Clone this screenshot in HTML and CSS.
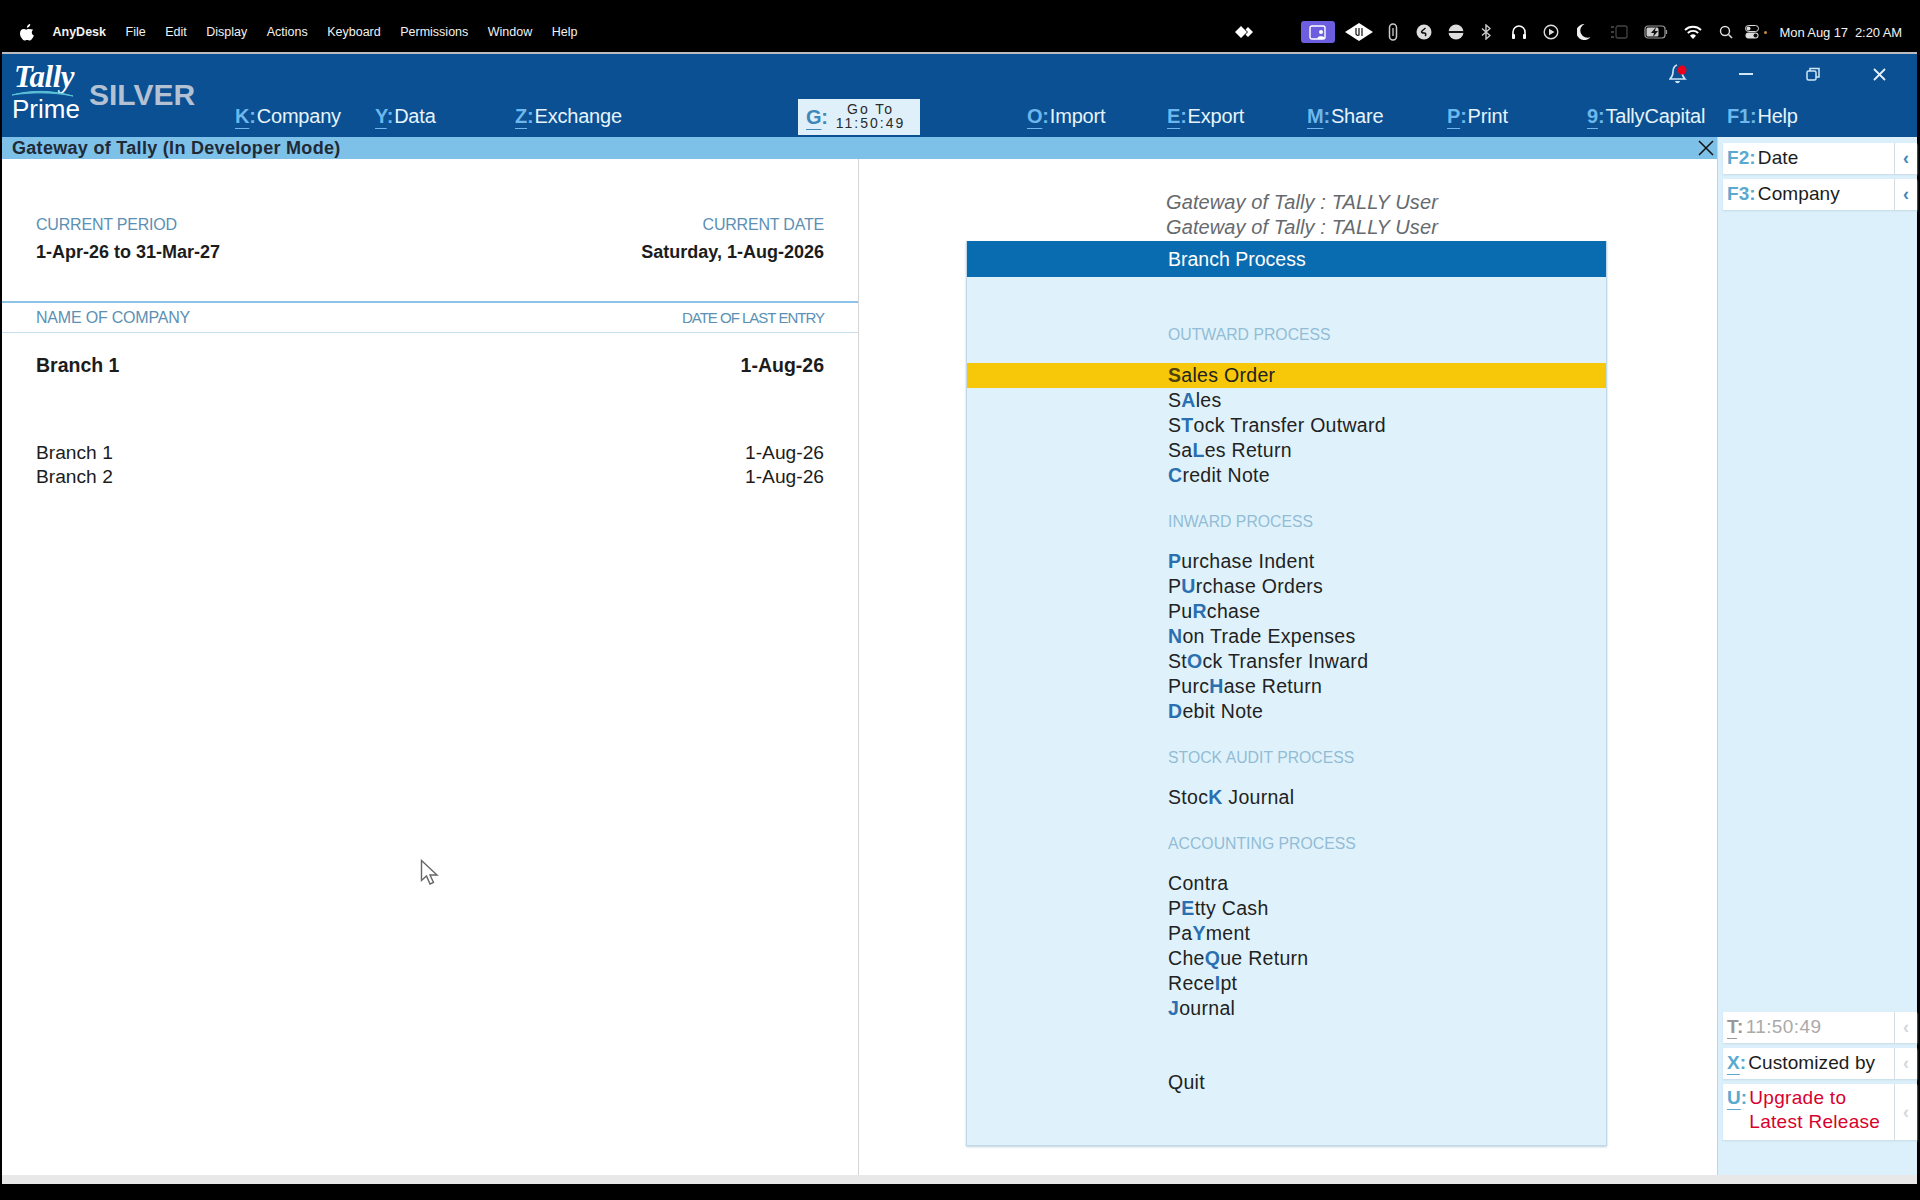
FILE: index.html
```html
<!DOCTYPE html>
<html>
<head>
    <title>TallyPrime</title>
    <link rel="stylesheet" href="styles.css">
</head>
<body>
    <div class="menubar">
        <div class="menus">
            <svg class="apple" width="14" height="17" viewBox="0 0 14 17"><path fill="#fff" d="M10.2 0c.1 1-.3 1.9-.9 2.6-.6.7-1.5 1.2-2.4 1.1-.1-.9.4-1.9.9-2.5C8.400.5 9.400.1 10.200 0zM13.300 5.800c-.9.6-1.500 1.500-1.500 2.700 0 1.400.8 2.500 2.100 3-.4 1.100-.9 2.100-1.600 3.100-.7 1-1.400 1.900-2.500 1.900s-1.400-.6-2.600-.6c-1.200 0-1.600.6-2.600.6-1.100 0-1.900-1-2.600-2C.5 12.900 0 11.100 0 9.400c0-2.800 1.800-4.300 3.600-4.300 1 0 1.800.6 2.500.6.6 0 1.600-.7 2.700-.7 1.700 0 3 .2 4.500.8z"/></svg>
            <span class="menu-app">AnyDesk</span>
            <span>File</span>
            <span>Edit</span>
            <span>Display</span>
            <span>Actions</span>
            <span>Keyboard</span>
            <span>Permissions</span>
            <span>Window</span>
            <span>Help</span>
        </div>
        <div class="status">
            <svg class="st-anydesk" width="20" height="14" viewBox="0 0 20 14"><path fill="#fff" d="M6 1l6 6-6 6-6-6zM13 2l5 5-5 5-2.500-2.500L13 7l-2.500-2.500z"/></svg>
            <div class="st-cast">
                <svg width="18" height="15" viewBox="0 0 18 15"><rect x="1" y="1" width="15" height="13" rx="2" fill="none" stroke="#fff" stroke-width="1.400"/><circle cx="12" cy="7" r="2" fill="#fff"/><path fill="#fff" d="M8.500 13c0-2.500 7-2.500 7 0v1h-7z"/></svg>
            </div>
            <svg class="st-ua" width="28" height="18" viewBox="0 0 28 18"><path fill="#fff" d="M14 0l14 9-14 9L0 9z"/><path fill="none" stroke="#111" stroke-width="1.200" d="M11 5v6a2 2 0 0 0 3 1V5M17 13V5"/></svg>
            <svg class="st-clip" width="10" height="18" viewBox="0 0 10 18"><rect x="1.500" y="1" width="7" height="16" rx="3.500" fill="none" stroke="#ccc" stroke-width="1.500"/><path d="M5 5v8" stroke="#ccc" stroke-width="1.300"/></svg>
            <svg class="st-shazam" width="16" height="16" viewBox="0 0 16 16"><circle cx="8" cy="8" r="7.500" fill="#ddd"/><path fill="none" stroke="#111" stroke-width="1.500" d="M9.500 4L6 7c-1 1 0 2 2 2s2.500 1.500 1 3"/></svg>
            <svg class="st-globe" width="16" height="16" viewBox="0 0 16 16"><circle cx="8" cy="8" r="7.500" fill="#ddd"/><path d="M0 8h16" stroke="#111" stroke-width="2"/></svg>
            <svg class="st-bt" width="10" height="16" viewBox="0 0 10 16"><path fill="none" stroke="#ccc" stroke-width="1.400" d="M1 4.500l8 7L5 15V1l4 3.500-8 7"/></svg>
            <svg class="st-phones" width="16" height="16" viewBox="0 0 16 16"><path fill="none" stroke="#fff" stroke-width="1.600" d="M2 12V8a6 6 0 0 1 12 0v4"/><rect x="1" y="10" width="3" height="5" rx="1" fill="#fff"/><rect x="12" y="10" width="3" height="5" rx="1" fill="#fff"/></svg>
            <svg class="st-play" width="16" height="16" viewBox="0 0 16 16"><circle cx="8" cy="8" r="6.800" fill="none" stroke="#ddd" stroke-width="1.400"/><path fill="#ddd" d="M6 4.800L11.500 8 6 11.200z"/></svg>
            <svg class="st-moon" width="14" height="16" viewBox="0 0 14 16"><path fill="#eee" d="M7.500 0a8 8 0 1 0 6 13A7 7 0 0 1 7.500 0z"/></svg>
            <svg class="st-screen" width="18" height="14" viewBox="0 0 18 14"><rect x="6" y="1" width="11" height="12" rx="2" fill="none" stroke="#444" stroke-width="1.300"/><path d="M1 2h3M1 7h3M1 12h3" stroke="#555" stroke-width="1.600"/></svg>
            <svg class="st-batt" width="24" height="14" viewBox="0 0 24 14"><rect x="1" y="1" width="20" height="12" rx="3" fill="none" stroke="#999" stroke-width="1.200"/><rect x="2.500" y="2.500" width="12" height="9" rx="1.500" fill="#ccc"/><path d="M22.500 5v4" stroke="#999" stroke-width="1.200"/><path fill="#111" d="M12 2L7 8h3l-1 4 5-6h-3z"/></svg>
            <svg class="st-wifi" width="18" height="14" viewBox="0 0 18 14"><path fill="none" stroke="#fff" stroke-width="1.800" d="M1 5a11.500 11.500 0 0 1 16 0M3.800 8a7.500 7.500 0 0 1 10.400 0"/><path fill="#fff" d="M9 14l-3-3.300a4.400 4.400 0 0 1 6 0z"/></svg>
            <svg class="st-search" width="14" height="14" viewBox="0 0 14 14"><circle cx="6" cy="6" r="4.500" fill="none" stroke="#ddd" stroke-width="1.400"/><path d="M9.500 9.500L13 13" stroke="#ddd" stroke-width="1.600"/></svg>
            <svg class="st-control" width="14" height="14" viewBox="0 0 14 14"><rect x=".5" y=".5" width="13" height="6" rx="3" fill="none" stroke="#ddd"/><circle cx="3.500" cy="3.500" r="2" fill="#ddd"/><rect x=".5" y="7.500" width="13" height="6" rx="3" fill="#ddd"/><circle cx="10.500" cy="10.500" r="2" fill="#111"/></svg>
            <div class="st-dot"></div>
            <span class="clock">Mon Aug 17&nbsp;&nbsp;2:20 AM</span>
        </div>
    </div>

    <div class="window">
        <div class="topbar">
            <div class="logo">
                <span class="logo-tally">Tally</span>
                <svg class="logo-swoosh" width="62" height="7" viewBox="0 0 62 7"><path d="M0 5c18-5 40-5 61 1C40 2 20 2 0 5z" fill="#5cc0d8" stroke="#5cc0d8"/></svg>
                <span class="logo-prime">Prime</span>
            </div>
            <div class="logo-silver">SILVER</div>
            <div class="actions">
                <div class="action action-k"><span class="key"><u>K</u>:</span>Company</div>
                <div class="action action-y"><span class="key"><u>Y</u>:</span>Data</div>
                <div class="action action-z"><span class="key"><u>Z</u>:</span>Exchange</div>
                <div class="goto">
                    <span class="goto-key"><u>G</u>:</span>
                    <span class="goto-text">Go To<br>11:50:49</span>
                </div>
                <div class="action action-o"><span class="key"><u>O</u>:</span>Import</div>
                <div class="action action-e"><span class="key"><u>E</u>:</span>Export</div>
                <div class="action action-m"><span class="key"><u>M</u>:</span>Share</div>
                <div class="action action-p"><span class="key"><u>P</u>:</span>Print</div>
                <div class="action action-9"><span class="key"><u>9</u>:</span>TallyCapital</div>
                <div class="action"><span class="key">F1:</span>Help</div>
            </div>
            <div class="window-controls">
                <svg class="bell" width="20" height="22" viewBox="0 0 20 22"><path fill="none" stroke="#cfe6f7" stroke-width="1.600" d="M8 2c-3 1-4 4-4 7 0 3-1 5-3 7h15c-2-2-3-4-3-7"/><path d="M6 18c1 3 4 3 5 0" fill="#cfe6f7"/><circle cx="13" cy="7" r="4.500" fill="#e8001c"/></svg>
                <div class="ctl-min"></div>
                <svg class="ctl-restore" width="14" height="14" viewBox="0 0 14 14"><rect x="1" y="4" width="9" height="9" rx="1.500" fill="none" stroke="#cfe6f7" stroke-width="1.500"/><path d="M4 4V1.500h9V10h-3" fill="none" stroke="#cfe6f7" stroke-width="1.500"/></svg>
                <svg class="ctl-close" width="13" height="13" viewBox="0 0 13 13"><path d="M1 1l11 11M12 1L1 12" stroke="#e4f1fb" stroke-width="1.800"/></svg>
            </div>
        </div>

        <div class="body-row">
            <div class="workarea">
                <div class="titlebar">
                    <span>Gateway of Tally (In Developer Mode)</span>
                    <svg width="16" height="16" viewBox="0 0 16 16"><path d="M1 1l14 14M15 1L1 15" stroke="#111" stroke-width="1.500"/></svg>
                </div>
                <div class="columns">
                    <div class="company-col">
                        <div class="period-labels">
                            <span>CURRENT PERIOD</span>
                            <span>CURRENT DATE</span>
                        </div>
                        <div class="period-values">
                            <span>1-Apr-26 to 31-Mar-27</span>
                            <span>Saturday, 1-Aug-2026</span>
                        </div>
                        <div class="company-head">
                            <span class="head-name">NAME OF COMPANY</span>
                            <span class="head-date">DATE OF LAST ENTRY</span>
                        </div>
                        <div class="company-current">
                            <span>Branch 1</span>
                            <span>1-Aug-26</span>
                        </div>
                        <div class="company-list">
                            <div class="company-row"><span>Branch 1</span><span>1-Aug-26</span></div>
                            <div class="company-row"><span>Branch 2</span><span>1-Aug-26</span></div>
                        </div>
                    </div>
                    <div class="menu-col">
                        <div class="menu-caption">Gateway of Tally : TALLY User</div>
                        <div class="menu-caption">Gateway of Tally : TALLY User</div>
                        <div class="panel">
                            <div class="panel-title">Branch Process</div>

                            <div class="group-head group-first">OUTWARD PROCESS</div>
                            <div class="item item-active"><b>S</b>ales Order</div>
                            <div class="item">S<b>A</b>les</div>
                            <div class="item">S<b>T</b>ock Transfer Outward</div>
                            <div class="item">Sa<b>L</b>es Return</div>
                            <div class="item"><b>C</b>redit Note</div>

                            <div class="group-head">INWARD PROCESS</div>
                            <div class="item"><b>P</b>urchase Indent</div>
                            <div class="item">P<b>U</b>rchase Orders</div>
                            <div class="item">Pu<b>R</b>chase</div>
                            <div class="item"><b>N</b>on Trade Expenses</div>
                            <div class="item">St<b>O</b>ck Transfer Inward</div>
                            <div class="item">Purc<b>H</b>ase Return</div>
                            <div class="item"><b>D</b>ebit Note</div>

                            <div class="group-head">STOCK AUDIT PROCESS</div>
                            <div class="item">Stoc<b>K</b> Journal</div>

                            <div class="group-head">ACCOUNTING PROCESS</div>
                            <div class="item">Contra</div>
                            <div class="item">P<b>E</b>tty Cash</div>
                            <div class="item">Pa<b>Y</b>ment</div>
                            <div class="item">Che<b>Q</b>ue Return</div>
                            <div class="item">Rece<b>I</b>pt</div>
                            <div class="item"><b>J</b>ournal</div>

                            <div class="item item-quit">Quit</div>
                        </div>
                    </div>
                </div>
            </div>

            <div class="sidebar">
                <div class="side-group">
                    <div class="side-btn">
                        <div class="side-text"><span class="side-key">F2:</span>Date</div>
                        <div class="side-arrow">‹</div>
                    </div>
                    <div class="side-btn">
                        <div class="side-text"><span class="side-key">F3:</span>Company</div>
                        <div class="side-arrow">‹</div>
                    </div>
                </div>
                <div class="side-group">
                    <div class="side-btn side-muted">
                        <div class="side-text"><span class="side-key"><u>T</u>:</span>11:50:49</div>
                        <div class="side-arrow">‹</div>
                    </div>
                    <div class="side-btn side-faint">
                        <div class="side-text"><span class="side-key"><u>X</u>:</span>Customized by</div>
                        <div class="side-arrow">‹</div>
                    </div>
                    <div class="side-btn side-faint side-tall">
                        <div class="side-text side-upgrade">
                            <span class="side-key"><u>U</u>:</span>
                            <span class="upgrade-text">Upgrade to<br>Latest Release</span>
                        </div>
                        <div class="side-arrow">‹</div>
                    </div>
                </div>
            </div>
        </div>
        <div class="statusbar"></div>
    </div>

    <svg class="cursor" width="20" height="28" viewBox="0 0 20 28"><path fill="#fff" stroke="#666" stroke-width="1.400" d="M1.500 1.500v20l5-4.500 3.500 8 3.500-1.500-3.500-7.500h7z"/></svg>
</body>
</html>
```

FILE: styles.css
```css
* {
    box-sizing: border-box;
}
body {
    margin: 0;
    width: 1920px;
    height: 1200px;
    overflow: hidden;
    position: relative;
    background: #000000;
    font-family: "Liberation Sans", Arial, sans-serif;
    color: #1c1c1c;
}
u {
    text-underline-offset: 5px;
    text-decoration-thickness: 1px;
}

/* mac menu bar */
.menubar {
    height: 52px;
    display: flex;
    justify-content: space-between;
    align-items: center;
    color: #f2f2f2;
    font-size: 12.500px;
    padding-top: 12px;
}
.menus {
    display: flex;
    align-items: center;
    margin-left: 20px;
    gap: 19.500px;
}
.menu-app {
    font-weight: bold;
}
.apple {
    margin-right: -1px;
}
.status {
    display: flex;
    align-items: center;
    margin-right: 18px;
}
.status svg {
    flex: none;
}
.st-anydesk { margin-right: 46px; }
.st-cast {
    width: 34px;
    height: 22px;
    background: #6d5ee0;
    border-radius: 3px;
    display: flex;
    align-items: center;
    justify-content: center;
    margin-right: 10px;
}
.st-ua { margin-right: 15px; }
.st-clip { margin-right: 18px; }
.st-shazam { margin-right: 16px; }
.st-globe { margin-right: 17px; }
.st-bt { margin-right: 20px; }
.st-phones { margin-right: 16px; }
.st-play { margin-right: 18px; }
.st-moon { margin-right: 19px; }
.st-screen { margin-right: 16px; }
.st-batt { margin-right: 16px; }
.st-wifi { margin-right: 17px; }
.st-search { margin-right: 12px; }
.st-control { margin-right: 5px; }
.st-dot {
    width: 3px;
    height: 3px;
    background: #c98a3a;
    border-radius: 50%;
    margin-right: 13px;
}
.clock {
    font-size: 13px;
    letter-spacing: -0.1px;
}

/* window */
.window {
    margin: 0 3px 0 2px;
    border-top: 2px solid #b9bdc2;
    background: #ffffff;
}
.topbar {
    height: 83px;
    background: #0a5092;
    display: flex;
    position: relative;
}
.logo {
    width: 77px;
    margin-left: 10px;
    display: flex;
    flex-direction: column;
    color: #ffffff;
}
.logo-tally {
    font-family: "Liberation Serif", serif;
    font-style: italic;
    font-weight: bold;
    font-size: 31px;
    line-height: 32px;
    margin-top: 7px;
    margin-left: 2px;
    letter-spacing: -0.5px;
}
.logo-swoosh {
    margin-top: -3px;
}
.logo-prime {
    font-size: 26px;
    line-height: 26px;
    margin-top: -1px;
}
.logo-silver {
    font-size: 30px;
    font-weight: bold;
    color: #b4c1d2;
    margin-top: 24px;
    line-height: 34px;
}
.actions {
    position: absolute;
    left: 233px;
    top: 0;
    height: 83px;
    display: flex;
    align-items: flex-end;
    color: #e6f3fc;
    font-size: 20px;
    letter-spacing: -0.2px;
}
.action {
    width: 140px;
    height: 35px;
    line-height: 28px;
    white-space: nowrap;
}
.action-z { width: 283px; }
.key {
    color: #6db7ec;
    font-weight: bold;
    margin-right: 1px;
}
.goto {
    width: 122px;
    height: 36px;
    margin-bottom: 2px;
    margin-right: 107px;
    background: #dff0fb;
    color: #2a2a2a;
    display: flex;
    align-items: center;
    padding-left: 8px;
}
.goto-key {
    color: #3f87b8;
    font-size: 20px;
    font-weight: bold;
}
.goto-text {
    font-size: 14px;
    line-height: 14px;
    letter-spacing: 2px;
    text-align: center;
    margin-left: 8px;
    margin-top: -2px;
}
.window-controls svg,
.ctl-min {
    position: absolute;
}
.bell { left: 1667px; top: 9px; }
.ctl-min {
    left: 1737px;
    top: 19px;
    width: 14px;
    height: 2px;
    background: #cfe6f7;
}
.ctl-restore { left: 1804px; top: 13px; }
.ctl-close { left: 1871px; top: 14px; }

.body-row {
    display: flex;
    height: 1038px;
}
.workarea {
    width: 1715px;
    display: flex;
    flex-direction: column;
}
.titlebar {
    height: 22px;
    flex: none;
    background: #7dc0e8;
    display: flex;
    justify-content: space-between;
    align-items: center;
    padding: 0 3px 0 10px;
    font-size: 18px;
    letter-spacing: 0.3px;
    font-weight: bold;
    color: #1e2a35;
}
.columns {
    flex: 1;
    display: flex;
}

/* left column */
.company-col {
    width: 857px;
    border-right: 1px solid #d4d4d4;
    padding-top: 54px;
}
.period-labels,
.period-values,
.company-head,
.company-current,
.company-row {
    display: flex;
    justify-content: space-between;
    padding: 0 34px 0 34px;
}
.period-labels {
    font-size: 16px;
    line-height: 24px;
    color: #5b90b4;
    letter-spacing: -0.2px;
}
.period-values {
    font-size: 18px;
    font-weight: bold;
    line-height: 24px;
    margin-top: 3px;
}
.company-head {
    margin-top: 37px;
    height: 32px;
    align-items: center;
    border-top: 2px solid #8cc3e6;
    border-bottom: 1px solid #c5dfee;
    font-size: 16px;
    color: #5b90b4;
}
.head-name {
    letter-spacing: -0.2px;
}
.head-date {
    font-size: 15px;
    letter-spacing: -1px;
}
.company-current {
    margin-top: 20px;
    font-size: 19.500px;
    font-weight: bold;
    line-height: 25px;
}
.company-list {
    margin-top: 63px;
}
.company-row {
    font-size: 19.200px;
    line-height: 24px;
}

/* right column */
.menu-col {
    flex: 1;
    padding: 31px 0 0 107px;
}
.menu-caption {
    width: 641px;
    padding-left: 200px;
    font-size: 20px;
    line-height: 25px;
    font-style: italic;
    letter-spacing: 0.1px;
    color: #666a6e;
    white-space: nowrap;
}
.panel {
    width: 641px;
    height: 905px;
    margin-top: 1px;
    background: #dff2fc;
    border: 1px solid #c2d8e6;
    border-top: none;
    box-shadow: 0 1px 2px #bcd0dc;
}
.panel-title {
    height: 36px;
    background: #0a6cb0;
    color: #ffffff;
    font-size: 19.500px;
    line-height: 36px;
    padding-left: 201px;
}
.group-head {
    height: 25px;
    line-height: 25px;
    padding-left: 201px;
    margin-top: 20.500px;
    margin-bottom: 15.500px;
    font-size: 15.800px;
    color: #93bcd4;
}
.group-first {
    margin-top: 45px;
    margin-bottom: 16px;
}
.item {
    height: 25px;
    line-height: 24px;
    padding-left: 201px;
    font-size: 19.500px;
    letter-spacing: 0.3px;
    color: #222222;
}
.item b {
    font-weight: bold;
    color: #2a6fb0;
}
.item-active {
    background: #f7c80a;
}
.item-active b {
    color: #4f4208;
}
.item-quit {
    margin-top: 49px;
}

/* right button bar */
.sidebar {
    flex: 1;
    background: #dcf0fb;
    border-left: 1px solid #c3d3dd;
    padding: 6px 0 35px 5px;
    display: flex;
    flex-direction: column;
    justify-content: space-between;
}
.side-btn {
    height: 31px;
    margin-bottom: 5px;
    background: #ffffff;
    display: flex;
    font-size: 19px;
    line-height: 30px;
    box-shadow: 0 1px 2px #c6dbe7;
}
.side-text {
    flex: 1;
    padding-left: 4px;
    white-space: nowrap;
    letter-spacing: 0.1px;
}
.side-key {
    color: #5aa9d0;
    font-weight: bold;
    margin-right: 2px;
}
.side-arrow {
    width: 23px;
    border-left: 1px solid #d6dde2;
    text-align: center;
    color: #3d86b8;
    font-size: 18px;
    font-weight: bold;
}
.side-muted .side-text {
    color: #aaaaaa;
    letter-spacing: 0.4px;
}
.side-muted .side-key {
    color: #999999;
}
.side-faint .side-arrow,
.side-muted .side-arrow {
    color: #d3d8dc;
}
.side-tall {
    height: 56px;
    margin-bottom: 0;
    line-height: 24px;
}
.side-upgrade {
    display: flex;
    padding-top: 2px;
}
.upgrade-text {
    color: #d8002e;
    letter-spacing: 0.3px;
}
.side-tall .side-arrow {
    line-height: 56px;
}
.statusbar {
    height: 9px;
    background: #e8e8e8;
}

.cursor {
    position: absolute;
    left: 420px;
    top: 859px;
}
```
